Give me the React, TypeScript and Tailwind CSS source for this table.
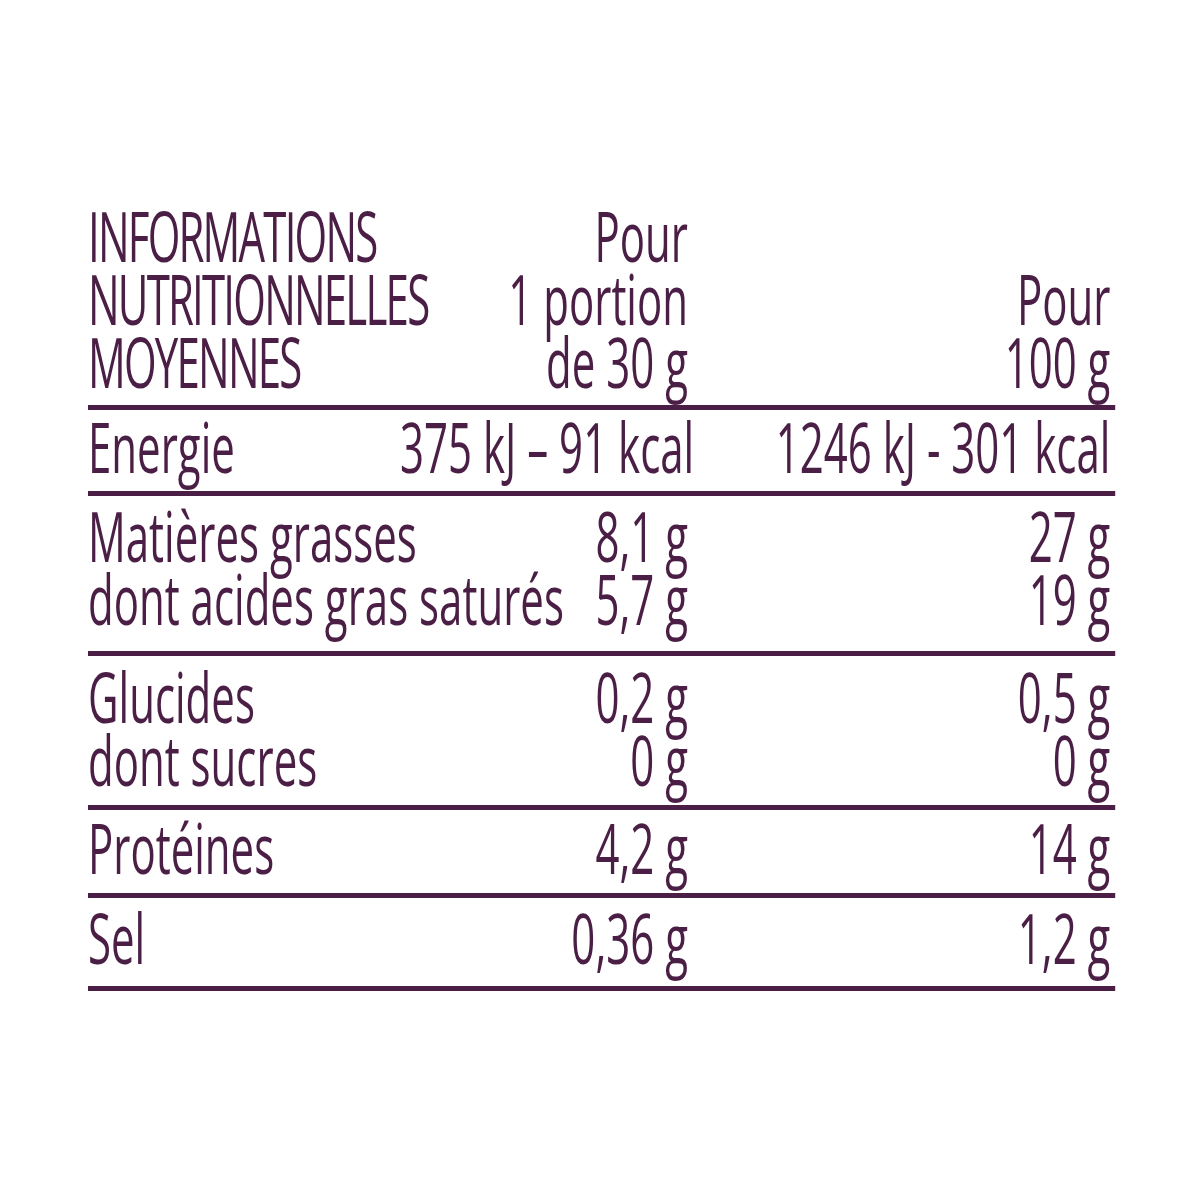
import React from "react";

type Row = { pad: string; lines: [string, string, string][] };

const rows: Row[] = [
  { pad: "pt-[5px] pb-[13px]", lines: [["Energie", "375 kJ – 91 kcal", "1246 kJ - 301 kcal"]] },
  {
    pad: "pt-[8px] pb-[21px]",
    lines: [
      ["Matières grasses", "8,1 g", "27 g"],
      ["dont acides gras saturés", "5,7 g", "19 g"],
    ],
  },
  {
    pad: "pt-[9px] pb-[14px]",
    lines: [
      ["Glucides", "0,2 g", "0,5 g"],
      ["dont sucres", "0 g", "0 g"],
    ],
  },
  { pad: "pt-[6px] pb-[14px]", lines: [["Protéines", "4,2 g", "14 g"]] },
  { pad: "pt-[8px] pb-[17px]", lines: [["Sel", "0,36 g", "1,2 g"]] },
];

export default function App() {
  return (
    <div className="min-h-[1200px] w-full overflow-hidden bg-white pt-[204px] pl-[88px] text-[#4a1e45]">
      {/* whole table is drawn wide, then squeezed horizontally to get the condensed type */}
      <div
        className="w-[1712px] origin-left scale-x-[0.6] text-[70px] font-medium leading-[63px] whitespace-nowrap"
        style={{ fontFamily: '"Open Sans", "Liberation Sans", sans-serif' }}
      >
        <div className="flex items-end border-b-[5px] border-[#4a1e45] pb-[12px]">
          <div className="flex-1 min-w-0 tracking-[-3px]">
            INFORMATIONS
            <br />
            NUTRITIONNELLES
            <br />
            MOYENNES
          </div>
          <div className="w-[480px] shrink-0 text-right">
            Pour
            <br />1 portion
            <br />
            de 30 g
          </div>
          <div className="w-[712px] shrink-0 pr-[8px] text-right">
            Pour
            <br />
            100 g
          </div>
        </div>
        {rows.map((row, i) => (
          <div key={i} className={`border-b-[5px] border-[#4a1e45] ${row.pad}`}>
            {row.lines.map(([label, a, b]) => (
              <div key={label} className="flex">
                <div className="flex-1 min-w-0">{label}</div>
                <div className="w-[480px] shrink-0 text-right">{a}</div>
                <div className="w-[712px] shrink-0 pr-[8px] text-right">{b}</div>
              </div>
            ))}
          </div>
        ))}
      </div>
    </div>
  );
}
